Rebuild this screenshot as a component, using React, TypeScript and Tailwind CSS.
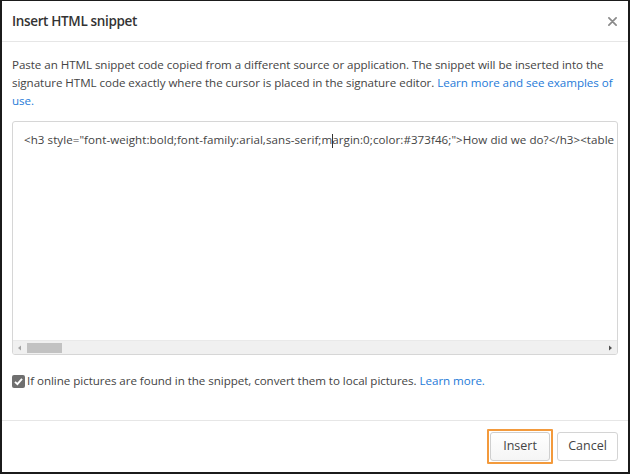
import React from "react";

const font = { fontFamily: '"Open Sans", "Noto Sans", sans-serif' };

export default function App() {
  return (
    <div
      className="w-[630px] h-[474px] bg-white border-l-2 border-r-2 border-t border-b-2 border-[#1b1b1b] flex flex-col text-[#404040] overflow-hidden"
      style={font}
    >
      <div className="h-[41px] flex items-center justify-between pl-[10px] pr-[10px] border-b border-[#e6e6e6] shrink-0">
        <div className="text-[13.5px] font-semibold text-[#333] tracking-[-0.35px]">Insert HTML snippet</div>
        <svg width="9" height="9" viewBox="0 0 10 10" className="mr-[1px]">
          <path d="M1 1 L9 9 M9 1 L1 9" stroke="#8a8a8a" strokeWidth="1.9" strokeLinecap="round" />
        </svg>
      </div>
      <div className="flex-1 flex flex-col px-[10px] pt-[14px]">
        <p className="text-[11.6px] leading-[18px] tracking-[-0.05px] text-[#444]">
          <span className="block whitespace-nowrap">
            Paste an HTML snippet code copied from a different source or application. The snippet will be inserted into the
          </span>
          <span className="block whitespace-nowrap">
            signature HTML code exactly where the cursor is placed in the signature editor.{" "}
            <span className="text-[#1e7ad8]">Learn more and see examples of</span>
          </span>
          <span className="block text-[#1e7ad8]">use.</span>
        </p>
        <div className="mt-[11px] h-[234px] border border-[#d6d6d6] rounded-[3px] flex flex-col overflow-hidden">
          <div className="flex-1 pl-[11px] pt-[9px] text-[11.6px] leading-[18px] tracking-[0.05px] text-[#444] whitespace-nowrap">
            &lt;h3 style="font-weight:bold;font-family:arial,sans-serif;m
            <span className="inline-block w-px h-[14px] bg-[#333] align-middle -mx-[0.5px]" />
            argin:0;color:#373f46;"&gt;How did we do?&lt;/h3&gt;&lt;table
          </div>
          <div className="h-[14px] bg-[#f0f0f0] border-t border-[#e9e9e9] flex items-center shrink-0">
            <svg width="14" height="14" viewBox="0 0 14 14" className="shrink-0">
              <path d="M8 4.5 L5 7 L8 9.5 Z" fill="#a3a3a3" />
            </svg>
            <div className="w-[35px] h-[10px] bg-[#c2c2c2]" />
            <div className="flex-1" />
            <svg width="14" height="14" viewBox="0 0 14 14" className="shrink-0">
              <path d="M6 4.5 L9 7 L6 9.5 Z" fill="#505050" />
            </svg>
          </div>
        </div>
        <div className="mt-[17px] flex items-center text-[11.6px] leading-[18px] tracking-[-0.05px] text-[#444]">
          <div className="w-[13px] h-[13px] rounded-[2px] bg-[#6f6f6f] flex items-center justify-center mr-[2px] shrink-0">
            <svg width="11" height="11" viewBox="0 0 11 11">
              <path d="M2 5.8 L4.4 8.2 L9 2.8" stroke="#fff" strokeWidth="1.9" fill="none" />
            </svg>
          </div>
          <span className="whitespace-nowrap">
            If online pictures are found in the snippet, convert them to local pictures.{" "}
            <span className="text-[#1e7ad8]">Learn more.</span>
          </span>
        </div>
      </div>
      <div className="h-[52px] border-t border-[#e6e6e6] flex items-center justify-end pr-[10px] gap-[4px] shrink-0">
        <div className="border-2 border-[#f39a3c] p-[1px] rounded-[1px]">
          <button className="w-[60px] h-[29px] border border-[#cfcfcf] rounded-[3px] bg-gradient-to-b from-white to-[#f5f5f5] text-[12.5px] text-[#444]">
            Insert
          </button>
        </div>
        <button className="w-[61px] h-[29px] border border-[#d4d4d4] rounded-[3px] bg-white text-[12.5px] text-[#444]">
          Cancel
        </button>
      </div>
    </div>
  );
}
